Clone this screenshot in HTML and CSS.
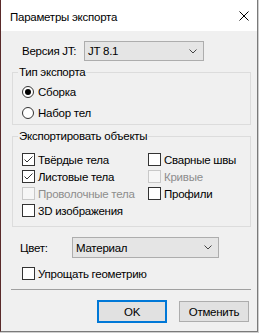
FILE: index.html
```html
<!DOCTYPE html>
<html lang="ru">
<head>
<meta charset="utf-8">
<link rel="stylesheet" href="styles.css">
</head>
<body>
<div class="window">
  <div class="titlebar">
    <span class="title">Параметры экспорта</span>
    <svg class="close" width="10" height="10" viewBox="0 0 10 10"><path d="M0.5 0.5L9.5 9.5M9.5 0.5L0.5 9.5" stroke="#000" stroke-width="1" fill="none"/></svg>
  </div>
  <div class="content">
    <div class="row version-row">
      <span class="label version-label">Версия JT:</span>
      <div class="combo version-combo"><span>JT 8.1</span>
        <svg class="chev" width="8" height="5" viewBox="0 0 8 5"><path d="M0.5 0.5L4 4L7.5 0.5" stroke="#444" fill="none"/></svg>
      </div>
    </div>

    <fieldset class="group group-type">
      <legend>Тип экспорта</legend>
      <div class="opt radio-row"><span class="radio checked"></span><span>Сборка</span></div>
      <div class="opt radio-row"><span class="radio"></span><span>Набор тел</span></div>
    </fieldset>

    <fieldset class="group group-objects">
      <legend>Экспортировать объекты</legend>
      <div class="grid">
        <div class="opt"><span class="box checked"><svg width="11" height="11" viewBox="0 0 11 11"><path d="M1.5 5.5L4 8L9.5 2.5" stroke="#333" fill="none"/></svg></span><span>Твёрдые тела</span></div>
        <div class="opt"><span class="box"></span><span>Сварные швы</span></div>
        <div class="opt"><span class="box checked"><svg width="11" height="11" viewBox="0 0 11 11"><path d="M1.5 5.5L4 8L9.5 2.5" stroke="#333" fill="none"/></svg></span><span>Листовые тела</span></div>
        <div class="opt disabled"><span class="box"></span><span>Кривые</span></div>
        <div class="opt disabled"><span class="box"></span><span>Проволочные тела</span></div>
        <div class="opt"><span class="box"></span><span>Профили</span></div>
        <div class="opt"><span class="box"></span><span>3D изображения</span></div>
      </div>
    </fieldset>

    <div class="row color-row">
      <span class="label color-label">Цвет:</span>
      <div class="combo color-combo"><span>Материал</span>
        <svg class="chev" width="8" height="5" viewBox="0 0 8 5"><path d="M0.5 0.5L4 4L7.5 0.5" stroke="#444" fill="none"/></svg>
      </div>
    </div>

    <div class="opt simplify"><span class="box"></span><span>Упрощать геометрию</span></div>

    <div class="sep"></div>

    <div class="buttons">
      <div class="btn ok">OK</div>
      <div class="btn cancel">Отменить</div>
    </div>
  </div>
</div>
</body>
</html>
```

FILE: styles.css
```css
html, body {
  margin: 0;
  padding: 0;
  background: #cfcfcf;
}
body {
  font-family: "Liberation Sans", Arial, sans-serif;
  font-size: 11.5px;
  letter-spacing: -0.25px;
  color: #000;
}
.window {
  width: 256px;
  height: 331px;
  border-left: 1px solid #5a2a2a;
  border-right: 1px solid #7a7a7a;
  border-bottom: 1px solid #7a7a7a;
  background: #f0f0f0;
  display: flex;
  flex-direction: column;
}
.titlebar {
  height: 31px;
  background: #fff;
  display: flex;
  align-items: center;
  justify-content: space-between;
  padding: 0 8px 0 9px;
  box-sizing: border-box;
}
.title {
  line-height: 16px;
  margin-top: 2px;
}
.close {
  display: block;
}
.content {
  padding: 10px 0 0 10px;
  display: flex;
  flex-direction: column;
}
.row {
  display: flex;
  align-items: center;
}
.label {
  line-height: 16px;
}
.version-label {
  margin-left: 11px;
  width: 62px;
}
.color-label {
  margin-left: 9px;
  width: 52px;
}
.combo {
  height: 20px;
  box-sizing: border-box;
  border: 1px solid #adadad;
  background: #e5e5e5;
  display: flex;
  align-items: center;
  justify-content: space-between;
  padding: 0 6px 0 3px;
  line-height: 16px;
}
.version-combo {
  width: 120px;
}
.color-combo {
  width: 147px;
  height: 21px;
}
.chev {
  display: block;
}
.group {
  margin: 3px 0 0 1px;
  width: 239px;
  box-sizing: border-box;
  border: 1px solid #dcdcdc;
  padding: 0 0 0 9px;
  min-width: 0;
}
.group legend {
  padding: 0 1px;
  margin-left: -4px;
  line-height: 16px;
  height: 16px;
}
.group-type {
  padding-top: 1px;
  padding-bottom: 1px;
}
.group-objects {
  padding-top: 7px;
  padding-bottom: 7px;
}
.opt {
  display: flex;
  align-items: center;
  height: 17px;
  line-height: 16px;
  white-space: nowrap;
}
.radio-row {
  height: 21px;
}
.radio {
  width: 12px;
  height: 12px;
  box-sizing: border-box;
  border: 1px solid #333;
  border-radius: 50%;
  background: #fff;
  margin-right: 4px;
  display: flex;
  align-items: center;
  justify-content: center;
}
.radio.checked::after {
  content: "";
  width: 6px;
  height: 6px;
  border-radius: 50%;
  background: #000;
}
.box {
  width: 13px;
  height: 13px;
  box-sizing: border-box;
  border: 1px solid #333;
  background: #fff;
  margin-right: 3px;
  display: flex;
  align-items: center;
  justify-content: center;
  flex: none;
}
.box svg {
  display: block;
}
.disabled {
  color: #8d8d8d;
}
.disabled .box {
  border-color: #c8c8c8;
  background: #f6f6f6;
}
.grid {
  display: grid;
  grid-template-columns: 126px auto;
}
.color-row {
  margin-top: 10px;
}
.simplify {
  margin: 7px 0 0 11px;
}
.sep {
  margin-top: 7px;
  width: 240px;
  height: 1px;
  background: #a0a0a0;
}
.buttons {
  margin: 10px 0 0 86px;
  display: flex;
  align-items: center;
  gap: 12px;
}
.btn {
  width: 70px;
  box-sizing: border-box;
  background: #e1e1e1;
  display: flex;
  align-items: center;
  justify-content: center;
  line-height: 16px;
}
.ok {
  height: 23px;
  border: 2px solid #0078d7;
}
.cancel {
  height: 21px;
  border: 1px solid #adadad;
}
```
